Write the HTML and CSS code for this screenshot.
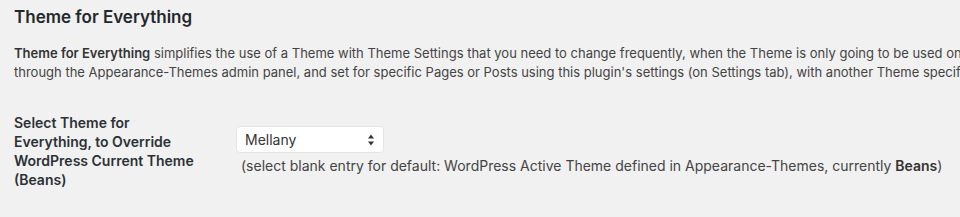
FILE: index.html
```html
<!DOCTYPE html>
<html lang="en">
<head>
  <meta charset="UTF-8" />
  <title>Theme for Everything</title>
  <link rel="stylesheet" href="styles.css">
</head>
<body>
  <div class="wrap">
    <h2>Theme for Everything</h2>
    <p class="intro"><strong>Theme for Everything</strong> simplifies the use of a Theme with Theme Settings that you need to change frequently, when the Theme is only going to be used on<br>through the Appearance-Themes admin panel, and set for specific Pages or Posts using this plugin's settings (on Settings tab), with another Theme specified as the default for the rest of the site.</p>

    <div class="form-row">
      <label class="row-label" for="themeSelect">Select Theme for Everything, to Override WordPress Current Theme (Beans)</label>
      <div class="row-field">
        <div class="select-box">
          <select id="themeSelect">
            <option></option>
            <option selected>Mellany</option>
            <option>Beans</option>
          </select>
          <svg class="arrows" width="6" height="12" viewBox="0 0 6 12">
            <path d="M3 0.5 L6 4.5 L0 4.5 Z" fill="#333"/>
            <path d="M3 11.5 L6 7.5 L0 7.5 Z" fill="#333"/>
          </svg>
        </div>
        <p class="description">(select blank entry for default: WordPress Active Theme defined in Appearance-Themes, currently <strong>Beans</strong>)</p>
      </div>
    </div>
  </div>
</body>
</html>
```

FILE: styles.css
```css
html, body {
  margin: 0;
  padding: 0;
  background: #f1f1f1;
  overflow: hidden;
}
body {
  font-family: Inter, "Liberation Sans", sans-serif;
  font-size: 13px;
  line-height: 1.4;
  color: #444;
}
.wrap { padding: 0 14px; width: 1200px; }
h2 {
  margin: 0;
  padding-top: 5px;
  font-size: 17px;
  line-height: 24px;
  font-weight: 600;
  color: #23282d;
}
.intro {
  margin: 15px 0 0;
  line-height: 19px;
  white-space: nowrap;
}
.intro strong { font-weight: 600; color: #333; }
.form-row {
  display: flex;
  margin-top: 31px;
}
.row-label {
  width: 186px;
  padding-right: 36px;
  font-size: 14px;
  font-weight: 600;
  color: #2c3136;
  line-height: 19px;
}
.row-field { padding-top: 13px; }
.select-box {
  position: relative;
  width: 148px;
}
.select-box select {
  appearance: none;
  -webkit-appearance: none;
  width: 148px;
  height: 27px;
  padding: 0 8px;
  border: 1px solid #e4e4e4;
  border-radius: 4px;
  background: #fff;
  font-family: inherit;
  font-size: 14px;
  color: #333;
}
.arrows {
  position: absolute;
  right: 10px;
  top: 8px;
}
.description {
  margin: 3px 0 0 5px;
  font-size: 14px;
  line-height: 19px;
  color: #444;
}
.description strong { font-weight: 600; color: #333; }
```
